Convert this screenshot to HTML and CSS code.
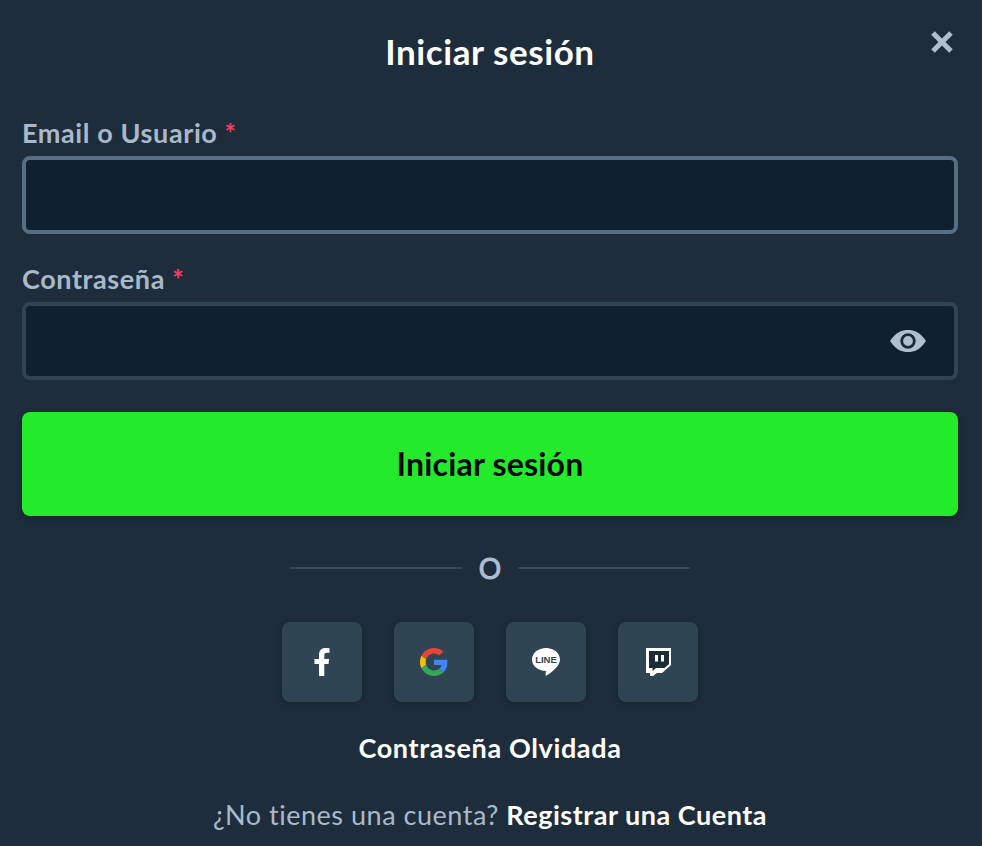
FILE: index.html
```html
<!DOCTYPE html>
<html lang="es">
<head>
    <meta charset="UTF-8" />
    <meta name="viewport" content="width=device-width, initial-scale=1.0" />
    <title>Iniciar sesión</title>
    <link rel="stylesheet" href="styles.css">
</head>
<body>
<main class="modal">
    <header class="modal-header">
        <h1>Iniciar sesión</h1>
        <button class="close" aria-label="Cerrar">
            <svg viewBox="0 0 24 24" width="24" height="24"><path d="M3 3 L21 21 M21 3 L3 21" stroke="#b1bdd0" stroke-width="5" fill="none"/></svg>
        </button>
    </header>

    <form class="login-form">
        <label class="field">
            <span class="field-label">Email o Usuario <span class="req">*</span></span>
            <span class="input-wrap"><input type="text" class="input input-focus"></span>
        </label>
        <label class="field">
            <span class="field-label">Contraseña <span class="req">*</span></span>
            <span class="input-wrap">
                <input type="password" class="input">
                <svg class="eye" viewBox="0 0 36 24" width="36" height="24">
                    <path d="M0 12 C6 3 12 1 18 1 C24 1 30 3 36 12 C30 21 24 23 18 23 C12 23 6 21 0 12 Z" fill="#b1bdd0"/>
                    <circle cx="18" cy="12" r="6.3" fill="none" stroke="#1a2c38" stroke-width="2.800"/>
                </svg>
            </span>
        </label>
        <button type="button" class="submit">Iniciar sesión</button>
    </form>

    <div class="divider"><span class="line"></span><span class="divider-text">O</span><span class="line"></span></div>

    <div class="socials">
        <button class="social" aria-label="Facebook">
            <svg viewBox="0 0 16 28" width="16" height="28"><path d="M5 28 V16 H0.5 V11 H5 V7 C5 2.5 7.5 0 11.500 0 C13 0 14.500 0.200 15.500 0.300 V4.800 H13 C10.800 4.800 10.300 5.800 10.300 7.500 V11 H15.300 L14.500 16 H10.300 V28 Z" fill="#fff"/></svg>
        </button>
        <button class="social" aria-label="Google">
            <svg viewBox="0 0 48 48" width="28" height="28">
                <path fill="#EA4335" d="M24 9.500c3.500 0 6.700 1.300 9.100 3.500l6.800-6.800C35.800 2.400 30.300 0 24 0 14.600 0 6.500 5.400 2.600 13.200l7.900 6.200C12.400 13.600 17.700 9.500 24 9.500z"/>
                <path fill="#4285F4" d="M47 24.500c0-1.600-.2-3.100-.4-4.500H24v9h12.900c-.6 3-2.200 5.500-4.700 7.200l7.700 6C44.400 37.900 47 31.800 47 24.500z"/>
                <path fill="#FBBC05" d="M10.500 28.600c-.5-1.400-.8-3-.8-4.600s.3-3.200.8-4.600l-7.900-6.200C.9 16.500 0 20.100 0 24s.9 7.500 2.600 10.800l7.900-6.200z"/>
                <path fill="#34A853" d="M24 48c6.500 0 11.900-2.100 15.900-5.800l-7.700-6c-2.200 1.400-4.900 2.300-8.200 2.300-6.300 0-11.600-4.100-13.500-9.900l-7.900 6.200C6.500 42.600 14.600 48 24 48z"/>
            </svg>
        </button>
        <button class="social" aria-label="Line">
            <svg viewBox="0 0 28 28" width="28" height="28">
                <path d="M14 0 C21.700 0 28 5 28 11.500 C28 17.500 21 23.500 14.500 27.500 C13.800 27.900 13.300 27.500 13.500 26.800 L14 23 C6 23 0 17.800 0 11.500 C0 5 6.300 0 14 0 Z" fill="#fff"/>
                <text x="14" y="15.300" class="line-text">LINE</text>
            </svg>
        </button>
        <button class="social" aria-label="Twitch">
            <svg viewBox="0 0 26 28" width="26" height="28">
                <path d="M1 0 H26 V17 L17 25 H12 L8 28 H5 V25 H1 Z" fill="#fff"/>
                <path d="M4 3 H24 V16 L19.500 20 H11 L7.500 23 V20 H4 Z" fill="#1a2c38"/>
                <rect x="10" y="7" width="3" height="6.500" fill="#fff"/>
                <rect x="16" y="7" width="3" height="6.500" fill="#fff"/>
            </svg>
        </button>
    </div>

    <a class="forgot" href="#">Contraseña Olvidada</a>
    <p class="register">¿No tienes una cuenta? <a href="#">Registrar una Cuenta</a></p>
</main>
</body>
</html>
```

FILE: styles.css
```css
* {
    box-sizing: border-box;
}
body {
    margin: 0;
    background-color: #1e2d3b;
    font-family: Lato, "Open Sans", sans-serif;
    color: #fff;
}
.modal {
    display: flex;
    flex-direction: column;
    height: 846px;
    overflow: hidden;
    padding: 0 24px 0 22px;
}
.modal-header {
    position: relative;
    height: 106px;
    padding-top: 28px;
    text-align: center;
}
.modal-header h1 {
    margin: 0;
    font-size: 35px;
    line-height: 46px;
    font-weight: 700;
    letter-spacing: 0.57px;
}
.close {
    position: absolute;
    top: 30px;
    right: 4px;
    padding: 0;
    border: none;
    background: none;
    line-height: 0;
}
.login-form {
    display: flex;
    flex-direction: column;
}
.field {
    display: block;
    margin-bottom: 18px;
}
.field:last-of-type {
    margin-bottom: 32px;
}
.field-label {
    display: block;
    height: 50px;
    padding-top: 9px;
    font-size: 27px;
    line-height: 36px;
    font-weight: 700;
    letter-spacing: 0.6px;
    color: #a9b9cb;
}
.req {
    color: #ed4163;
}
.input-wrap {
    position: relative;
    display: block;
}
.input {
    display: block;
    width: 100%;
    height: 78px;
    background-color: #0f212e;
    border: 4px solid #2f4553;
    border-radius: 8px;
}
.input-focus {
    border-color: #557086;
}
.eye {
    position: absolute;
    top: 27px;
    right: 32px;
}
.submit {
    height: 104px;
    padding-bottom: 3px;
    border: none;
    border-radius: 8px;
    background-color: #23ea2a;
    color: #05080a;
    font-family: inherit;
    font-size: 32px;
    font-weight: 700;
    letter-spacing: 0.2px;
    box-shadow: 0 2px 6px rgba(0, 0, 0, 0.25);
}
.divider {
    display: flex;
    align-items: center;
    justify-content: center;
    gap: 17px;
    height: 36px;
    margin-top: 34px;
}
.line {
    width: 172px;
    height: 2px;
    background-color: #384a58;
}
.divider-text {
    font-size: 28px;
    font-weight: 400;
    color: #b1bdd0;
    -webkit-text-stroke: 1px #b1bdd0;
}
.socials {
    display: flex;
    justify-content: center;
    gap: 32px;
    margin-top: 36px;
}
.social {
    display: flex;
    align-items: center;
    justify-content: center;
    width: 80px;
    height: 80px;
    padding: 0;
    border: none;
    border-radius: 8px;
    background-color: #2f4553;
    box-shadow: 0 2px 6px rgba(0, 0, 0, 0.2);
}
.line-text {
    font-family: "Liberation Sans", sans-serif;
    font-size: 9.500px;
    font-weight: 700;
    text-anchor: middle;
    fill: #2f4553;
}
.forgot {
    margin-top: 28px;
    text-align: center;
    font-size: 27px;
    line-height: 36px;
    font-weight: 700;
    letter-spacing: 0.63px;
    color: #fff;
    text-decoration: none;
}
.register {
    margin: 31px 0 0;
    text-align: center;
    font-size: 27px;
    line-height: 36px;
    letter-spacing: 0.52px;
    color: #a9b9cb;
}
.register a {
    font-weight: 700;
    color: #fff;
    text-decoration: none;
}
```
